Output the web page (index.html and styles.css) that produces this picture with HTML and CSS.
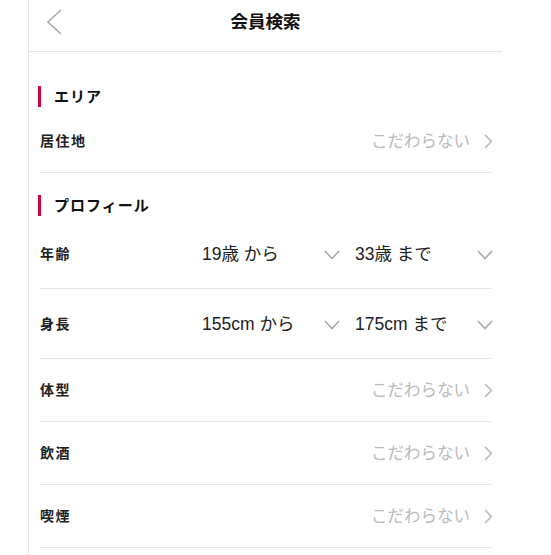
FILE: index.html
```html
<!DOCTYPE html>
<html lang="ja">
<head>
    <meta charset="UTF-8">
    <title>会員検索</title>
    <link rel="stylesheet" href="styles.css">
</head>
<body>
    <div class="page">
        <header class="topbar">
            <a class="back" href="#">
                <svg width="16" height="26" viewBox="0 0 16 26"><polyline points="15,1 2,13 15,25" fill="none" stroke="#aaa" stroke-width="1.6"/></svg>
            </a>
            <h1 class="title">会員検索</h1>
            <span></span>
        </header>

        <main class="content">
            <!-- area -->
            <section class="group group-first">
                <h2 class="group-title">エリア</h2>
                <a class="row" href="#">
                    <span class="row-label">居住地</span>
                    <span class="row-value">こだわらない</span>
                    <svg class="arrow" width="9" height="15" viewBox="0 0 9 15"><polyline points="1,1 7.5,7.5 1,14" fill="none" stroke="#bbb" stroke-width="1.6"/></svg>
                </a>
            </section>

            <!-- profile -->
            <section class="group">
                <h2 class="group-title">プロフィール</h2>
                <div class="row row-range">
                    <span class="row-label">年齢</span>
                    <div class="range">
                        <div class="select">
                            <span>19歳 から</span>
                            <svg width="16" height="10" viewBox="0 0 16 10"><polyline points="1,1 8,8.5 15,1" fill="none" stroke="#aaa" stroke-width="1.6"/></svg>
                        </div>
                        <div class="select">
                            <span>33歳 まで</span>
                            <svg width="16" height="10" viewBox="0 0 16 10"><polyline points="1,1 8,8.5 15,1" fill="none" stroke="#aaa" stroke-width="1.6"/></svg>
                        </div>
                    </div>
                </div>
                <div class="row row-range">
                    <span class="row-label">身長</span>
                    <div class="range">
                        <div class="select">
                            <span>155cm から</span>
                            <svg width="16" height="10" viewBox="0 0 16 10"><polyline points="1,1 8,8.5 15,1" fill="none" stroke="#aaa" stroke-width="1.6"/></svg>
                        </div>
                        <div class="select">
                            <span>175cm まで</span>
                            <svg width="16" height="10" viewBox="0 0 16 10"><polyline points="1,1 8,8.5 15,1" fill="none" stroke="#aaa" stroke-width="1.6"/></svg>
                        </div>
                    </div>
                </div>
                <a class="row" href="#">
                    <span class="row-label">体型</span>
                    <span class="row-value">こだわらない</span>
                    <svg class="arrow" width="9" height="15" viewBox="0 0 9 15"><polyline points="1,1 7.5,7.5 1,14" fill="none" stroke="#bbb" stroke-width="1.6"/></svg>
                </a>
                <a class="row" href="#">
                    <span class="row-label">飲酒</span>
                    <span class="row-value">こだわらない</span>
                    <svg class="arrow" width="9" height="15" viewBox="0 0 9 15"><polyline points="1,1 7.5,7.5 1,14" fill="none" stroke="#bbb" stroke-width="1.6"/></svg>
                </a>
                <a class="row" href="#">
                    <span class="row-label">喫煙</span>
                    <span class="row-value">こだわらない</span>
                    <svg class="arrow" width="9" height="15" viewBox="0 0 9 15"><polyline points="1,1 7.5,7.5 1,14" fill="none" stroke="#bbb" stroke-width="1.6"/></svg>
                </a>
            </section>
        </main>
    </div>
</body>
</html>
```

FILE: styles.css
```css
* {
    box-sizing: border-box;
}

body {
    margin: 0;
    background: #fff;
    color: #222;
    font-family: "Liberation Sans", "Noto Sans CJK JP", sans-serif;
}

.page {
    margin-left: 28px;
    width: 474px;
    min-height: 100vh;
    border-left: 1px solid #e6e6e6;
}

.topbar {
    display: grid;
    grid-template-columns: 1fr auto 1fr;
    align-items: center;
    height: 52px;
    padding-bottom: 7px;
    border-bottom: 1px solid #e6e6e6;
}

.back {
    display: flex;
    padding-left: 17px;
}

.title {
    margin: 0;
    font-size: 17.5px;
    font-weight: bold;
    line-height: 20px;
    color: #111;
}

.content {
    padding: 0 11px;
}

.group-title {
    margin: 22px 0 3px -2px;
    height: 21px;
    padding-left: 13px;
    border-left: 3px solid #d4003b;
    font-size: 15px;
    font-weight: bold;
    line-height: 21px;
    letter-spacing: 1px;
    color: #111;
}

.group-first .group-title {
    margin-top: 34px;
}

.row {
    display: flex;
    align-items: center;
    height: 63px;
    border-bottom: 1px solid #e6e6e6;
    text-decoration: none;
    color: inherit;
}

.row-label {
    font-size: 14px;
    font-weight: bold;
    letter-spacing: 1.5px;
    line-height: 16px;
    color: #222;
}

.row-value {
    margin-left: auto;
    font-size: 16.5px;
    line-height: 18px;
    color: #bbb;
}

.arrow {
    margin: 0 -2px 0 14px;
}

.row-range {
    height: 70px;
}

.row-range .row-label {
    width: 162px;
    flex: none;
}

.range {
    flex: 1;
    display: grid;
    grid-template-columns: 1fr 1fr;
    gap: 15px;
    margin-right: -2px;
}

.select {
    display: flex;
    align-items: center;
    justify-content: space-between;
    font-size: 17.5px;
    line-height: 20px;
    color: #222;
}

.select svg {
    margin-top: 3px;
}
```
